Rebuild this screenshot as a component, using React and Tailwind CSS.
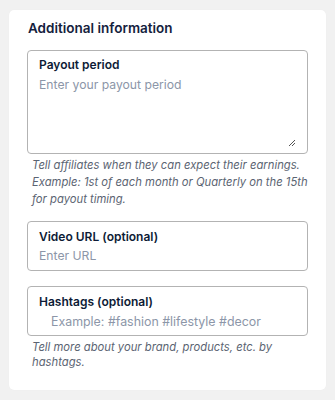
export default function App() {
  return (
    <div className="w-[335px] h-[400px] bg-[#f1f1f1] pt-[10px] px-[9px] font-['Inter',sans-serif]">
      <div className="bg-white rounded-[5px] px-[18px] pt-[8px] pb-[20px] shadow-[0_0_1px_rgba(0,0,0,0.05)]">
        <h2 className="text-[13.5px] leading-[20px] font-semibold text-[#14213d] ml-[1px]">Additional information</h2>

        <div className="mt-[12px] h-[104px] border border-[#b3b3b3] rounded-[4px] px-[11px] pt-[6px] relative">
          <div className="text-[12px] leading-[16px] font-semibold text-[#0d1b36]">Payout period</div>
          <div className="mt-[4px] text-[12.2px] leading-[16px] text-[#8c96a8]">Enter your payout period</div>
          <svg className="absolute right-[11px] bottom-[6px]" width="8" height="8" viewBox="0 0 8 8">
            <line x1="1" y1="7" x2="7" y2="1" stroke="#555" strokeWidth="1" />
            <line x1="4" y1="7" x2="7" y2="4" stroke="#555" strokeWidth="1" />
          </svg>
        </div>
        <p className="mt-[3px] ml-[5px] text-[11.25px] leading-[17px] italic text-[#5b6472]">
          Tell affiliates when they can expect their earnings. Example: 1st of each month or Quarterly on the 15th for payout timing.
        </p>

        <div className="mt-[13px] h-[50px] border border-[#b3b3b3] rounded-[4px] px-[11px] pt-[7px]">
          <div className="text-[12px] leading-[16px] font-semibold text-[#0d1b36]">Video URL (optional)</div>
          <div className="mt-[3px] text-[12.2px] leading-[16px] text-[#8c96a8]">Enter URL</div>
        </div>

        <div className="mt-[15px] h-[50px] border border-[#b3b3b3] rounded-[4px] px-[11px] pt-[7px]">
          <div className="text-[12px] leading-[16px] font-semibold text-[#0d1b36]">Hashtags (optional)</div>
          <div className="mt-[4px] ml-[12px] text-[12.4px] leading-[16px] text-[#8c96a8]">Example: #fashion #lifestyle #decor</div>
        </div>
        <p className="mt-[4px] ml-[5px] text-[11.25px] leading-[15px] italic text-[#5b6472]">
          Tell more about your brand, products, etc. by hashtags.
        </p>
      </div>
    </div>
  );
}
